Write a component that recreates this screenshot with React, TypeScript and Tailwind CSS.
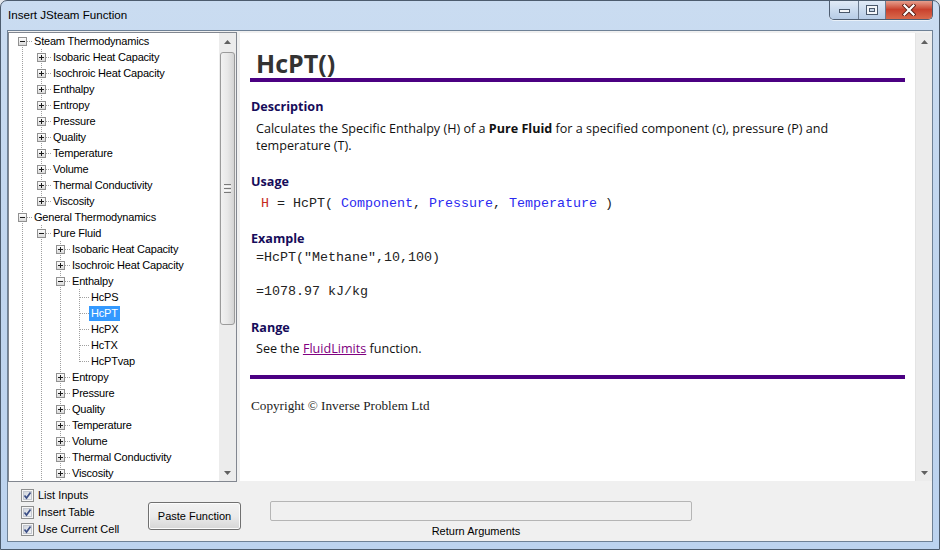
import type { ReactNode } from 'react';

type Row = {
  level: number;
  text: string;
  exp?: '+' | '-';
  guides: number[];
  first?: boolean;
  last?: boolean;
  selected?: boolean;
};

const steamKids = [
  'Isobaric Heat Capacity',
  'Isochroic Heat Capacity',
  'Enthalpy',
  'Entropy',
  'Pressure',
  'Quality',
  'Temperature',
  'Volume',
  'Thermal Conductivity',
  'Viscosity',
];
const funcs = ['HcPS', 'HcPT', 'HcPX', 'HcTX', 'HcPTvap'];
const fluidTail = ['Entropy', 'Pressure', 'Quality', 'Temperature', 'Volume', 'Thermal Conductivity', 'Viscosity'];

const rows: Row[] = [
  { level: 0, text: 'Steam Thermodynamics', exp: '-', guides: [], first: true },
  ...steamKids.map((t, i) => ({
    level: 1,
    text: t,
    exp: '+' as const,
    guides: [0],
    last: i === steamKids.length - 1,
  })),
  { level: 0, text: 'General Thermodynamics', exp: '-', guides: [] },
  { level: 1, text: 'Pure Fluid', exp: '-', guides: [0] },
  { level: 2, text: 'Isobaric Heat Capacity', exp: '+', guides: [0, 1] },
  { level: 2, text: 'Isochroic Heat Capacity', exp: '+', guides: [0, 1] },
  { level: 2, text: 'Enthalpy', exp: '-', guides: [0, 1] },
  ...funcs.map((t, i) => ({
    level: 3,
    text: t,
    guides: [0, 1, 2],
    last: i === funcs.length - 1,
    selected: t === 'HcPT',
  })),
  ...fluidTail.map((t) => ({ level: 2, text: t, exp: '+' as const, guides: [0, 1] })),
];

const DOT = '#a0a0a0';

function Guide({ on }: { on: boolean }) {
  return (
    <svg width="19" height="16" className="block shrink-0" shapeRendering="crispEdges">
      {on && <line x1="9.5" y1="0" x2="9.5" y2="16" stroke={DOT} strokeDasharray="1 1" />}
    </svg>
  );
}

function Connector({ row }: { row: Row }) {
  return (
    <svg width="19" height="16" className="block shrink-0" shapeRendering="crispEdges">
      <line x1="9.5" y1={row.first ? 8 : 0} x2="9.5" y2={row.last ? 9 : 16} stroke={DOT} strokeDasharray="1 1" />
      <line x1="10" y1="8.5" x2="19" y2="8.5" stroke={DOT} strokeDasharray="1 1" />
      {row.exp && (
        <>
          <rect x="5.5" y="4.5" width="8" height="8" fill="url(#treebox)" stroke="#919191" />
          <line x1="7" y1="8.5" x2="12" y2="8.5" stroke="#1c1c1c" />
          {row.exp === '+' && <line x1="9.5" y1="6" x2="9.5" y2="11" stroke="#1c1c1c" />}
        </>
      )}
    </svg>
  );
}

function TreeRow({ row }: { row: Row }) {
  const cells: ReactNode[] = [];
  for (let i = 0; i < row.level; i++) cells.push(<Guide key={i} on={row.guides.includes(i)} />);
  return (
    <div className="flex h-4 items-center">
      {cells}
      <Connector row={row} />
      <span
        className={
          'whitespace-nowrap px-[2px] leading-[15px] tracking-[-0.2px] ' +
          (row.selected ? 'bg-[#3399ff] text-white' : 'text-black')
        }
      >
        {row.text}
      </span>
    </div>
  );
}

function Tri({ down }: { down?: boolean }) {
  return (
    <svg width="7" height="4" viewBox="0 0 7 4" className="block">
      <polygon points={down ? '0,0 7,0 3.5,4' : '0,4 7,4 3.5,0'} fill="#606060" />
    </svg>
  );
}

function TreeScroll() {
  return (
    <div className="flex w-[17px] shrink-0 flex-col bg-[#ececec]">
      <div className="flex h-[17px] items-center justify-center">
        <Tri />
      </div>
      <div className="mx-[1px] mt-[2px] flex h-[273px] flex-col items-center justify-center gap-[1px] rounded-[3px] border border-[#9b9b9b] bg-linear-to-r from-[#f2f2f2] via-[#e8e8e8] to-[#d4d4d4]">
        {[0, 1, 2, 3].map((i) => (
          <div key={i} className={'h-px w-[7px] ' + (i % 2 === 0 ? 'bg-[#7a7a7a]' : 'bg-[#fafafa]')} />
        ))}
        <div className="h-px w-[7px] bg-[#7a7a7a]" />
      </div>
      <div className="flex-1" />
      <div className="flex h-[17px] items-center justify-center">
        <Tri down />
      </div>
    </div>
  );
}

function Check({ label }: { label: string }) {
  return (
    <div className="flex h-[17px] items-center">
      <svg width="13" height="13" className="block shrink-0" shapeRendering="crispEdges">
        <defs>
          <linearGradient id="cbg" x1="0" y1="0" x2="1" y2="1">
            <stop offset="0" stopColor="#cfd4dc" />
            <stop offset="1" stopColor="#f4f5f7" />
          </linearGradient>
        </defs>
        <rect x="0.5" y="0.5" width="12" height="12" fill="#f6f6f6" stroke="#8e8f8f" />
        <rect x="2.5" y="2.5" width="8" height="8" fill="url(#cbg)" stroke="#c3c7cf" />
        <path d="M3.5 6.5 L5.5 9 L9.5 3.5" stroke="#3c4f86" strokeWidth="1.7" fill="none" shapeRendering="auto" />
      </svg>
      <span className="ml-[4px] whitespace-nowrap text-black">{label}</span>
    </div>
  );
}

function CaptionButtons() {
  return (
    <div className="-mt-px mr-[6px] flex h-[20px] overflow-hidden rounded-b-[5px] border border-t-0 border-[#4f5e72] shadow-[0_1px_0_rgba(255,255,255,0.6)]">
      <div className="flex w-[29px] items-center justify-center border-r border-[#6b7a8e] bg-linear-to-b from-[#e3ecf7] via-[#ccdcef] to-[#b7cce6]">
        <svg width="13" height="5" className="mt-[4px] block" shapeRendering="crispEdges">
          <rect x="1.5" y="0.5" width="10" height="3" fill="#f4f6f9" stroke="#4a586b" />
        </svg>
      </div>
      <div className="flex w-[27px] items-center justify-center border-r border-[#6b7a8e] bg-linear-to-b from-[#e3ecf7] via-[#ccdcef] to-[#b7cce6]">
        <svg width="12" height="10" className="block" shapeRendering="crispEdges">
          <rect x="0.5" y="0.5" width="11" height="9" fill="#f4f6f9" stroke="#4a586b" />
          <rect x="3.5" y="3.5" width="5" height="3" fill="#c7d5e6" stroke="#4a586b" />
        </svg>
      </div>
      <div className="flex w-[46px] items-center justify-center bg-linear-to-b from-[#e8a898] via-[#c9412d] to-[#d9694c]">
        <svg width="14" height="12" viewBox="0 0 14 12" className="block">
          <path d="M2.5 1.5 L11.5 10.5 M11.5 1.5 L2.5 10.5" stroke="#5a1e14" strokeWidth="4" strokeLinecap="square" />
          <path d="M2.5 1.5 L11.5 10.5 M11.5 1.5 L2.5 10.5" stroke="#ffffff" strokeWidth="2.2" strokeLinecap="square" />
        </svg>
      </div>
    </div>
  );
}

const body = "font-['Open_Sans',sans-serif] text-[12.6px] leading-[17px] text-[#111]";
const head = "font-['Open_Sans',sans-serif] text-[12.6px] font-bold leading-[18px] text-[#160c5a]";
const mono = "font-['Liberation_Mono',monospace] text-[13.33px] leading-[17px] whitespace-pre text-[#222]";
const blue = 'text-[#2a2af0]';

function HelpPage() {
  return (
    <div className="flex-1 bg-white px-[10px] pt-[15px]">
      <h1 className="pl-[6px] font-['Open_Sans',sans-serif] text-[25px] leading-[30px] font-bold text-[#333]">
        HcPT()
      </h1>
      <div className="h-[4px] bg-[#4b0082]" />

      <h2 className={head + ' mt-[16px] pl-[1px]'}>Description</h2>
      <p className={body + ' mt-[4px] pl-[6px] pr-[50px]'}>
        Calculates the Specific Enthalpy (H) of a <b>Pure Fluid</b> for a specified component (c), pressure (P) and
        temperature (T).
      </p>

      <h2 className={head + ' mt-[19px] pl-[1px]'}>Usage</h2>
      <div className={mono + ' mt-[4px] pl-[11px]'}>
        <span className="text-[#c62a1c]">H</span> = HcPT( <span className={blue}>Component</span>,{' '}
        <span className={blue}>Pressure</span>, <span className={blue}>Temperature</span> )
      </div>

      <h2 className={head + ' mt-[18px] pl-[1px]'}>Example</h2>
      <div className={mono + ' mt-[1px] pl-[6px]'}>=HcPT("Methane",10,100)</div>
      <div className={mono + ' mt-[17px] pl-[6px]'}>=1078.97 kJ/kg</div>

      <h2 className={head + ' mt-[19px] pl-[1px]'}>Range</h2>
      <p className={body + ' mt-[3px] pl-[6px]'}>
        See the <span className="text-[#800080] underline">FluidLimits</span> function.
      </p>

      <div className="mt-[18px] h-[4px] bg-[#4b0082]" />
      <p className="mt-[18px] pl-[1px] font-['Liberation_Serif',serif] text-[13.2px] leading-[17px] text-[#222]">
        Copyright © Inverse Problem Ltd
      </p>
    </div>
  );
}

export default function App() {
  return (
    <div className="h-[550px] w-[940px] bg-[#e3e7ec] font-['Liberation_Sans',Arial,sans-serif] text-[11px]">
      <svg width="0" height="0" className="absolute">
        <defs>
          <linearGradient id="treebox" x1="0" y1="0" x2="0" y2="1">
            <stop offset="0" stopColor="#ffffff" />
            <stop offset="1" stopColor="#d9d9d9" />
          </linearGradient>
        </defs>
      </svg>
      <div className="flex h-full flex-col overflow-hidden rounded-t-[7px] border border-[#4d5c6e] bg-linear-to-b from-[#cadcf1] via-[#c0d5ee] to-[#bcd3ef]">
        {/* title bar */}
        <div className="flex h-[29px] shrink-0 items-start justify-between">
          <div className="pl-[7px] pt-[7px] text-[11.6px] leading-[14px] text-black">Insert JSteam Function</div>
          <CaptionButtons />
        </div>

        {/* client */}
        <div className="mx-[6px] flex h-[512px] flex-col border border-[#6e8196] bg-[#f0f0f0]">
          <div className="mt-[1px] flex">
            <div className="flex h-[450px] w-[229px] shrink-0 border border-[#828790] bg-white">
              <div className="flex-1 overflow-hidden pl-[4px]">
                {rows.map((r, i) => (
                  <TreeRow key={i} row={r} />
                ))}
              </div>
              <TreeScroll />
            </div>
            <div className="ml-[3px] mt-[1px] flex h-[448px] flex-1">
              <HelpPage />
              <div className="flex w-[17px] shrink-0 flex-col border-l border-[#e4e4e4] bg-[#ececec]">
                <div className="flex h-[17px] items-center justify-center">
                  <Tri />
                </div>
                <div className="flex-1" />
                <div className="flex h-[17px] items-center justify-center">
                  <Tri down />
                </div>
              </div>
            </div>
          </div>

          {/* bottom controls */}
          <div className="flex flex-1">
            <div className="w-[140px] shrink-0 pl-[13px] pt-[5px]">
              <Check label="List Inputs" />
              <Check label="Insert Table" />
              <Check label="Use Current Cell" />
            </div>
            <div className="mt-[20px] flex h-[28px] w-[93px] shrink-0 items-center justify-center rounded-[3px] border border-[#707070] bg-linear-to-b from-[#f2f2f2] via-[#ebebeb] to-[#d6d6d6] text-black shadow-[inset_0_0_0_1px_#fcfcfc]">
              Paste Function
            </div>
            <div className="ml-[29px] flex w-[422px] shrink-0 flex-col">
              <div className="mt-[19px] h-[20px] rounded-[2px] border border-[#b5b5b5] bg-[#f0f0f0]" />
              <div className="mt-[3px] pr-[10px] text-center leading-[14px] text-black">Return Arguments</div>
            </div>
          </div>
        </div>
      </div>
    </div>
  );
}
